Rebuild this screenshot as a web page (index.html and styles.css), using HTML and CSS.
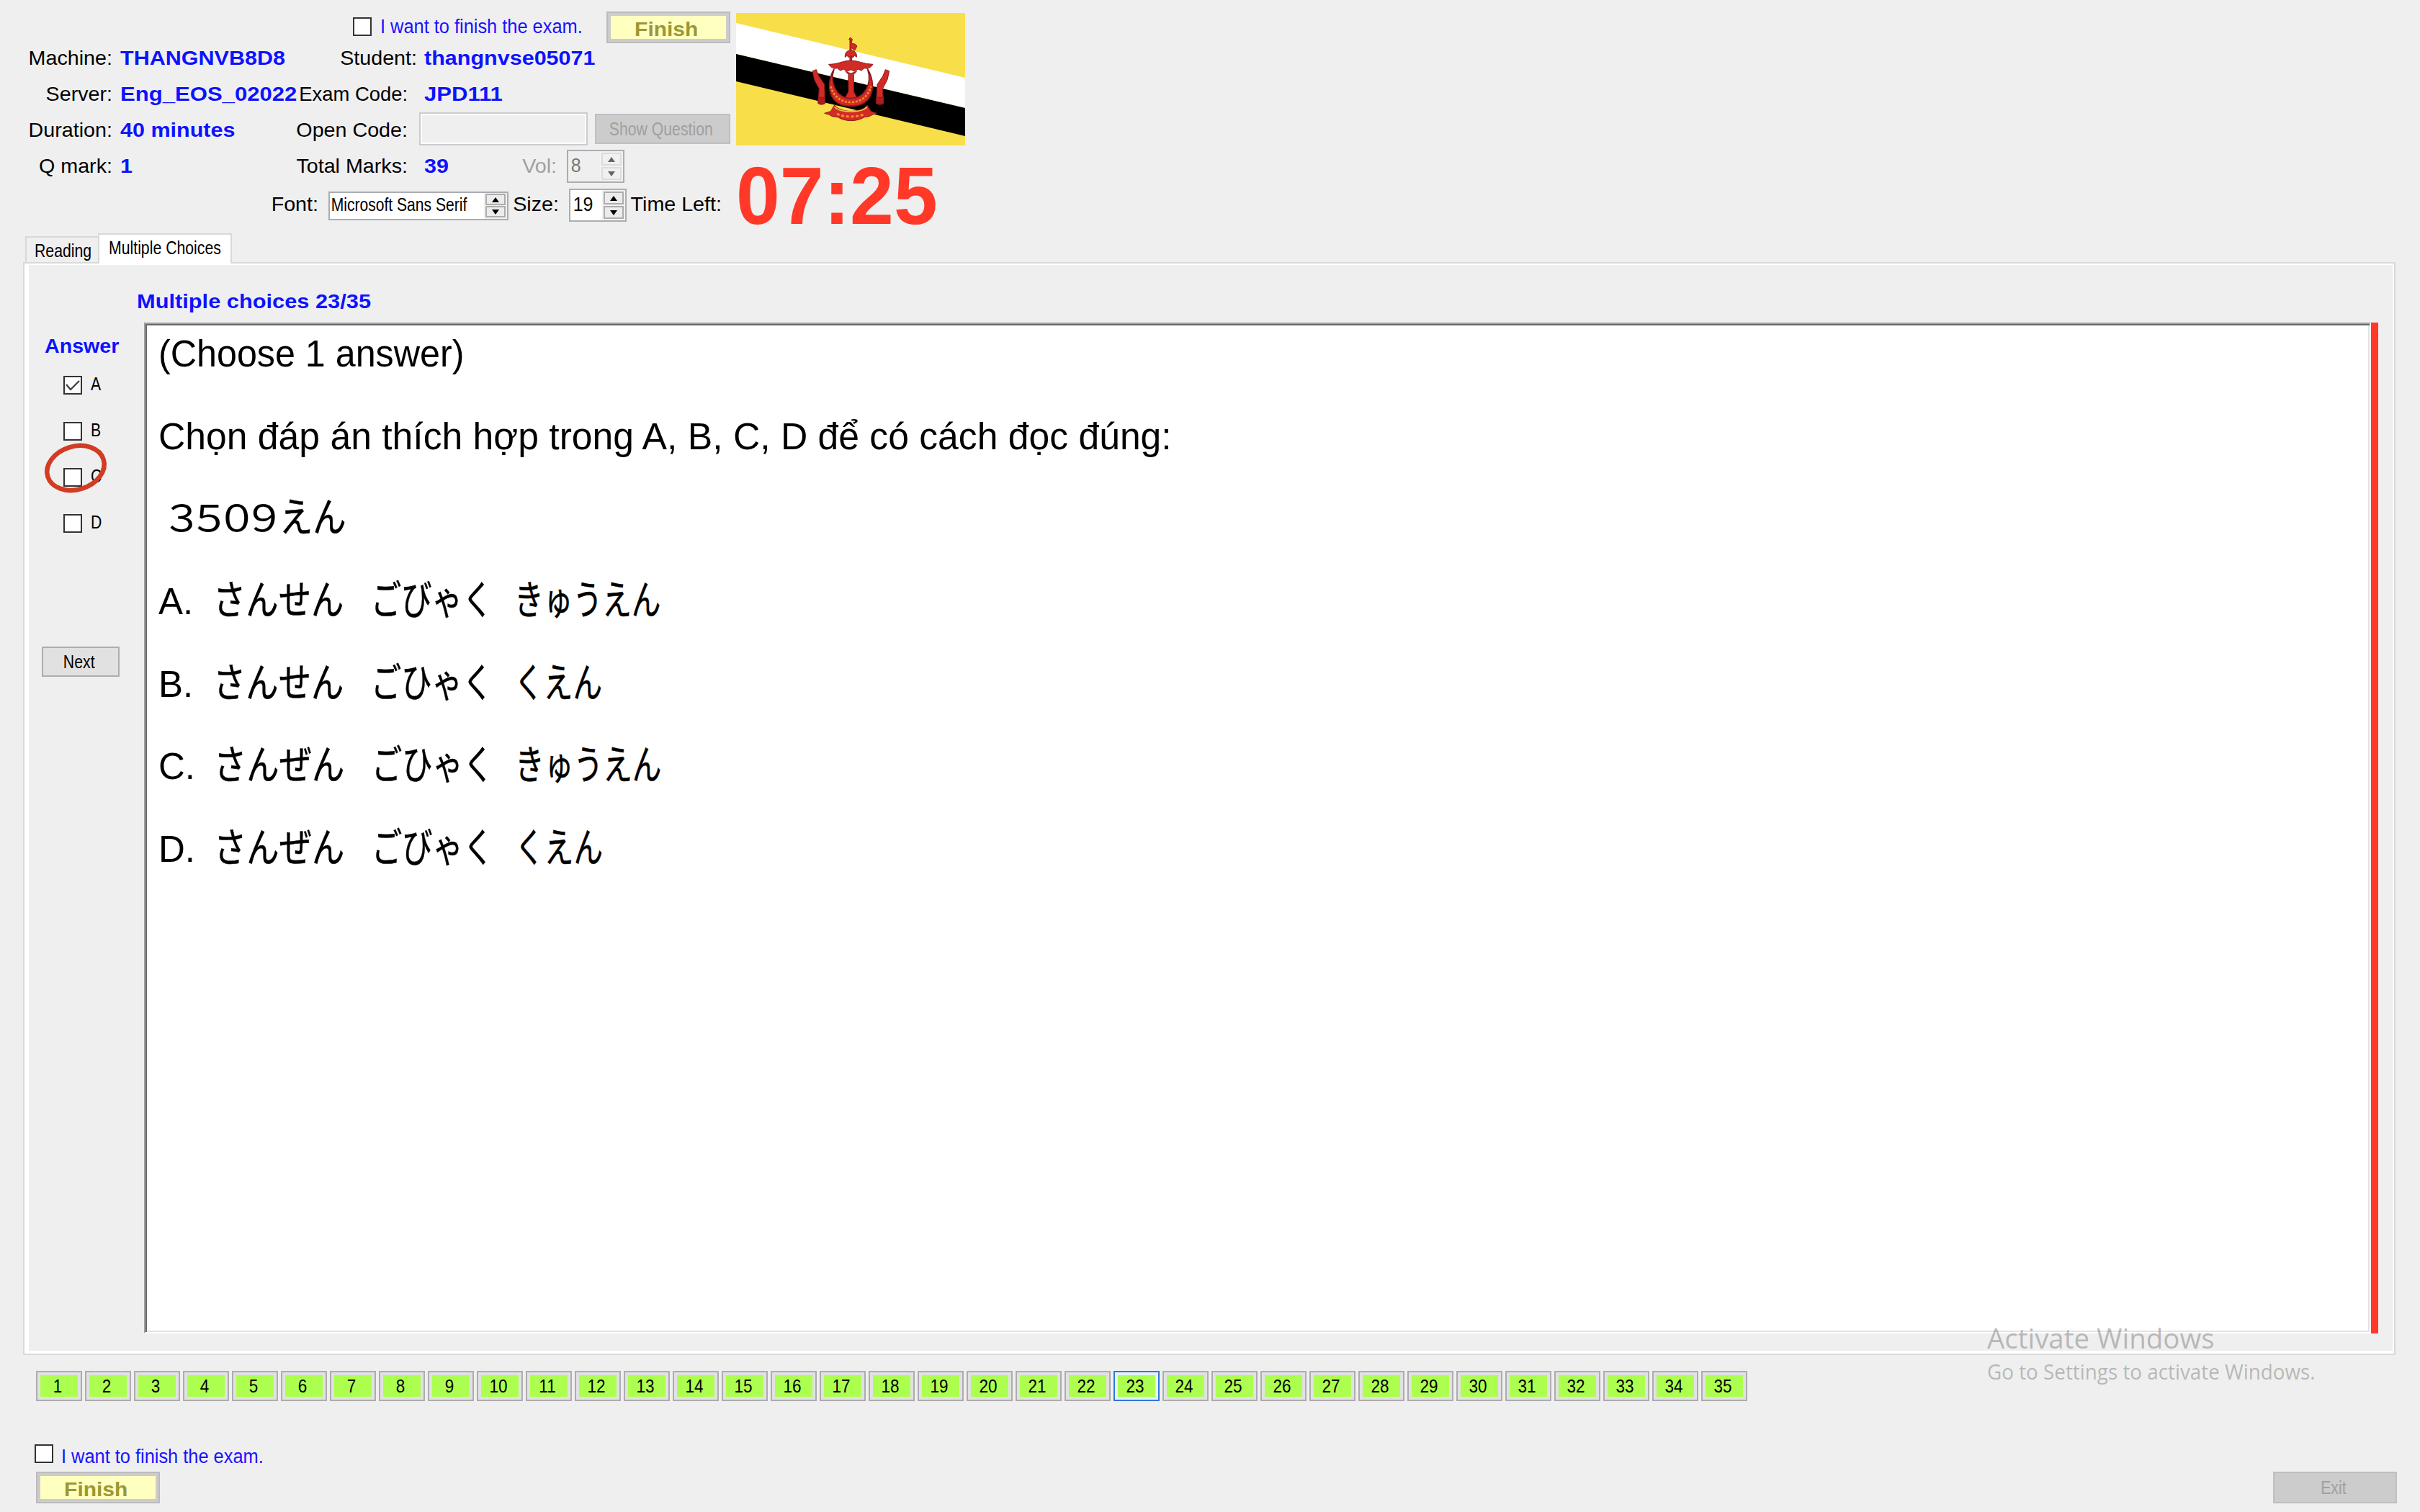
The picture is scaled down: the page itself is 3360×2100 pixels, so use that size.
FILE: index.html
```html
<!DOCTYPE html>
<html lang="vi">
<head>
<meta charset="utf-8">
<title>Exam client</title>
<link rel="stylesheet" href="styles.css">
</head>
<body>
<header class="header">
  <div class="info">
    <div class="finish-row">
      <span class="check"></span>
      <span class="agree">I want to finish the exam.</span>
      <button class="btn btn-finish"><span>Finish</span></button>
    </div>
    <div class="row">
      <span class="label">Machine:</span><span class="value">THANGNVB8D8</span>
      <span class="label label-student">Student:</span><span class="value value-wide">thangnvse05071</span>
    </div>
    <div class="row">
      <span class="label">Server:</span><span class="value value-server">Eng_EOS_02022</span>
      <span class="label label-exam">Exam Code:</span><span class="value value-wide value-server">JPD111</span>
    </div>
    <div class="row">
      <span class="label">Duration:</span><span class="value">40 minutes</span>
      <span class="label">Open Code:</span>
      <div class="open-code"><span class="textbox"></span><button class="btn btn-off btn-show"><span class="small">Show Question</span></button></div>
    </div>
    <div class="row">
      <span class="label">Q mark:</span><span class="value">1</span>
      <span class="label">Total Marks:</span>
      <div class="marks">
        <span class="value value-wide">39</span>
        <span class="label label-vol">Vol:</span>
        <div class="spinner spinner-off">
          <span class="num">8</span>
          <div class="steps">
            <span class="step"><svg width="10" height="7" viewBox="0 0 10 7"><path d="M0 7L5 0L10 7Z"/></svg></span>
            <span class="step"><svg width="10" height="7" viewBox="0 0 10 7"><path d="M0 0L5 7L10 0Z"/></svg></span>
          </div>
        </div>
      </div>
    </div>
    <div class="font-row">
      <span class="label label-font">Font:</span>
      <div class="spinner spinner-font">
        <span class="small">Microsoft Sans Serif</span>
        <div class="steps">
          <span class="step"><svg width="10" height="7" viewBox="0 0 10 7"><path d="M0 7L5 0L10 7Z"/></svg></span>
          <span class="step"><svg width="10" height="7" viewBox="0 0 10 7"><path d="M0 0L5 7L10 0Z"/></svg></span>
        </div>
      </div>
      <span class="label label-size">Size:</span>
      <div class="spinner">
        <span class="num">19</span>
        <div class="steps">
          <span class="step"><svg width="10" height="7" viewBox="0 0 10 7"><path d="M0 7L5 0L10 7Z"/></svg></span>
          <span class="step"><svg width="10" height="7" viewBox="0 0 10 7"><path d="M0 0L5 7L10 0Z"/></svg></span>
        </div>
      </div>
      <span class="label label-time">Time Left:</span>
    </div>
  </div>
  <div class="clock">
    <svg class="flag" width="318" height="184" viewBox="0 0 318 184">
      <rect width="318" height="184" fill="#f8df4a"/>
      <path d="M0 14L318 90V132L0 57Z" fill="#fff"/>
      <path d="M0 57L318 132V171L0 95Z" fill="#000"/>
      <g transform="translate(88 22) scale(.3333)" fill="#d22a25" stroke="#8d1a1c" stroke-width="3" stroke-linejoin="round">
        <path d="M210 92V44L206 44L212 36L220 44L216 60L232 64L240 72L230 90L216 78V92Z"/>
        <path d="M190 118C188 100 198 90 214 90S240 100 238 118L230 112L222 120L214 112L206 120L198 112Z"/>
        <path d="M210 116H218V134H210Z"/>
        <path d="M122 148C160 148 184 132 214 132S270 148 306 148C298 162 284 168 270 164L258 174L244 168L230 178L214 170L198 178L184 168L170 174L158 164C144 168 130 162 122 148Z"/>
        <path d="M192 178L204 190V262L192 284L196 294H234L238 284L226 262V190L238 178L214 186Z"/>
        <path d="M144 168C108 230 118 322 214 322S322 230 284 168C304 230 270 290 214 290S124 230 144 168Z" stroke-width="5"/>
        <path d="M130 240C144 286 176 306 214 306S284 286 298 240" fill="none" stroke="#f0902a" stroke-width="8" stroke-dasharray="9 6"/>
        <path d="M146 318C170 352 258 352 282 318L298 344L322 352L304 358C292 366 280 368 270 368C240 388 190 388 160 368C148 368 134 366 124 358L104 352L130 344Z"/>
        <path d="M146 326C172 352 256 352 282 326" fill="none" stroke="#e8c63c" stroke-width="5"/>
        <path d="M156 354C184 370 244 370 272 354" fill="none" stroke="#f0902a" stroke-width="9" stroke-dasharray="12 8"/>
        <path d="M54 176L70 170L80 196L104 232L106 308C106 318 78 318 78 308L82 250L62 212Z"/>
        <path d="M374 176L358 170L348 196L324 232L320 308C320 318 350 318 350 308L346 250L366 212Z"/>
        <path d="M78 286H106V312H78ZM320 286H350V312H320Z" fill="#a81f20"/>
      </g>
    </svg>
    <span class="time">07:25</span>
  </div>
</header>

<nav class="tabs">
  <span class="tab"><span class="small">Reading</span></span>
  <span class="tab tab-on"><span class="small">Multiple Choices</span></span>
</nav>

<main class="panel">
  <div class="page">
    <h1 class="title"><span>Multiple choices 23/35</span></h1>
    <div class="work">
      <aside class="side">
        <h2 class="answer">Answer</h2>
        <div class="option"><span class="check"><svg width="22" height="22" viewBox="0 0 22 22"><path d="M2 10L8 17L20 5" fill="none" stroke="#444" stroke-width="2.4"/></svg></span><span class="small">A</span></div>
        <div class="option"><span class="check"></span><span class="small">B</span></div>
        <div class="option"><span class="check"></span><span class="small">C</span>
          <svg class="ring" width="96" height="80" viewBox="0 0 96 80"><ellipse cx="48" cy="40" rx="40.5" ry="30" transform="rotate(-17 48 40)" fill="none" stroke="#d23c22" stroke-width="6.5"/></svg>
        </div>
        <div class="option"><span class="check"></span><span class="small">D</span></div>
        <button class="btn btn-next"><span class="small">Next</span></button>
      </aside>
      <section class="question">
        <p><span class="choose">(Choose 1 answer)</span></p>
        <p><span class="prompt">Chọn đáp án thích hợp trong A, B, C, D để có cách đọc đúng:</span></p>
        <p class="price"><span class="digits">３５０９</span><span class="yen">えん</span></p>
        <p><span class="key">A.</span><span class="w1">さんせん</span><span class="w2">ごびゃく</span><span class="w3">きゅうえん</span></p>
        <p><span class="key">B.</span><span class="w1">さんせん</span><span class="w2">ごひゃく</span><span class="w3">くえん</span></p>
        <p><span class="key key-wide">C.</span><span class="w1">さんぜん</span><span class="w2">ごひゃく</span><span class="w3">きゅうえん</span></p>
        <p><span class="key key-wide">D.</span><span class="w1">さんぜん</span><span class="w2">ごびゃく</span><span class="w3">くえん</span></p>
      </section>
      <div class="redbar"></div>
    </div>
  </div>
</main>

<nav class="numbers">
  <button class="no"><span>1</span></button><button class="no"><span>2</span></button><button class="no"><span>3</span></button><button class="no"><span>4</span></button><button class="no"><span>5</span></button><button class="no"><span>6</span></button><button class="no"><span>7</span></button><button class="no"><span>8</span></button><button class="no"><span>9</span></button><button class="no"><span>10</span></button><button class="no"><span>11</span></button><button class="no"><span>12</span></button><button class="no"><span>13</span></button><button class="no"><span>14</span></button><button class="no"><span>15</span></button><button class="no"><span>16</span></button><button class="no"><span>17</span></button><button class="no"><span>18</span></button><button class="no"><span>19</span></button><button class="no"><span>20</span></button><button class="no"><span>21</span></button><button class="no"><span>22</span></button><button class="no no-on"><span>23</span></button><button class="no"><span>24</span></button><button class="no"><span>25</span></button><button class="no"><span>26</span></button><button class="no"><span>27</span></button><button class="no"><span>28</span></button><button class="no"><span>29</span></button><button class="no"><span>30</span></button><button class="no"><span>31</span></button><button class="no"><span>32</span></button><button class="no"><span>33</span></button><button class="no"><span>34</span></button><button class="no"><span>35</span></button>
</nav>

<footer class="footer">
  <div class="consent"><span class="check"></span><span class="agree">I want to finish the exam.</span></div>
  <div class="actions">
    <button class="btn btn-finish"><span>Finish</span></button>
    <button class="btn btn-off btn-exit"><span class="small">Exit</span></button>
  </div>
</footer>

<div class="watermark">
  <div class="wm-title">Activate Windows</div>
  <div class="wm-text">Go to Settings to activate Windows.</div>
</div>
</body>
</html>
```

FILE: styles.css
```css
* { box-sizing: border-box; margin: 0; padding: 0; }

body {
  width: 3360px;
  height: 2100px;
  overflow: hidden;
  position: relative;
  background: #efefef;
  color: #000;
  font-family: "Liberation Sans", Arial, sans-serif;
  font-size: 28px;
  white-space: nowrap;
}

button { font-family: inherit; color: inherit; }

/* Shared text styles */
.small { display: inline-block; font-size: 25px; transform: scaleX(.85); transform-origin: 0 50%; }
.agree { display: inline-block; font-size: 27px; line-height: 50px; color: #1a12ff; transform: scaleX(.94); transform-origin: 0 50%; }

.check {
  display: block;
  flex: none;
  width: 26px;
  height: 26px;
  border: 2px solid #333;
  background: #fff;
}
.check svg { display: block; }

/* Buttons */
.btn {
  display: flex;
  flex: none;
  align-items: center;
  justify-content: center;
  border: 2px solid #adadad;
  background: #e1e1e1;
  padding-right: 5px;
}
.btn .small { transform-origin: 50% 50%; }
.btn-off { background: #ccc; border-color: #bfbfbf; color: #a0a0a0; }
.btn-finish {
  width: 172px;
  height: 44px;
  padding: 5px 6px 0 0;
  border-color: #bcbcbc;
  background: #ffffc0;
  box-shadow: inset 0 0 0 4px #ccc;
  color: #9a9833;
  font-weight: bold;
  font-size: 28px;
}
.btn-finish span { transform: scaleX(1.07); }

/* Header */
.header { display: flex; height: 324px; }
.info { width: 1022px; flex: none; }
.finish-row { display: flex; height: 56px; padding-left: 490px; }
.finish-row .check { margin-top: 24px; }
.finish-row .agree { width: 314px; margin: 12px 0 -6px 12px; }
.finish-row .btn { margin-top: 16px; }

.row { display: grid; grid-template-columns: 157px 253px 157px 455px; height: 50px; line-height: 50px; }
.label { display: block; padding-right: 1px; text-align: right; transform: scaleX(1.024); transform-origin: 100% 50%; }
.label-student { margin-right: -13px; }
.label-exam { transform: scaleX(.978); }
.value { display: block; margin-left: 10px; color: #0d12ff; font-weight: bold; transform: scaleX(1.09); transform-origin: 0 50%; }
.value-server { transform: scaleX(1.11); }
.value-wide { margin-left: 22px; }

.open-code { display: flex; padding-left: 15px; }
.textbox { width: 234px; height: 46px; border: 2px solid #ccc; box-shadow: inset 0 0 0 2px #fff; }
.btn-show { width: 188px; height: 42px; margin: 2px 0 0 10px; }

.marks { display: flex; }
.label-vol { width: 119px; margin-left: 35px; color: #a0a0a0; }
.marks .spinner { margin: 2px 0 0 13px; }

.font-row { display: flex; height: 50px; margin-top: 3px; line-height: 50px; }
.label-font { width: 443px; }
.label-size { width: 71px; }
.label-time { width: 133px; }
.font-row .spinner { margin: 3px 0 0 13px; }
.font-row .spinner-font { margin: 7px 0 0 13px; }

.spinner { display: flex; flex: none; justify-content: space-between; width: 80px; height: 46px; border: 2px solid #abadb3; background: #fff; }
.spinner-font { width: 250px; height: 40px; }
.spinner-font .small { width: 200px; padding-left: 2px; line-height: 33px; transform: scaleX(.843); }
.num { display: block; width: 34px; padding-left: 4px; font-size: 27px; line-height: 40px; transform: scaleX(.925); transform-origin: 0 50%; }
.steps { display: flex; flex-direction: column; gap: 2px; width: 32px; padding: 2px 2px 0 2px; background: #f2f2f2; height: 42px; }
.step { display: flex; align-items: center; justify-content: center; width: 28px; height: 18px; border: 2px solid #adadad; background: #ececec; }
.spinner-font .steps { height: 36px; gap: 1px; padding-top: 1px; }
.spinner-font .step { height: 16px; }
.spinner-off { background: #efefef; color: #777; fill: #666; }
.spinner-off .step { border-color: #dcdcdc; background: #f0f0f0; }

.clock { display: flex; flex: none; flex-direction: column; width: 318px; padding-top: 18px; }
.flag { display: block; flex: none; }
.time { display: block; margin-top: 10px; color: #ff3828; font-weight: bold; font-size: 113px; line-height: 120px; transform: scaleX(.968); transform-origin: 0 50%; }

/* Tabs */
.tabs { display: flex; align-items: flex-end; height: 40px; padding-left: 35px; }
.tab { width: 101px; height: 36px; padding-left: 11px; border: 2px solid #d9d9d9; border-width: 2px 0 0 2px; line-height: 36px; }
.tab-on { position: relative; z-index: 1; width: 186px; height: 42px; margin-bottom: -2px; padding-left: 13px; border-width: 2px 2px 0; background: #fff; line-height: 35px; }

/* Tab page */
.panel { width: 3294px; height: 1518px; margin-left: 32px; padding: 2px 2px 4px 6px; border: 2px solid #d9d9d9; background: #fff; }
.page { height: 1508px; padding-top: 33px; background: #efefef; }
.title { height: 47px; padding-left: 150px; color: #0d12ff; font-size: 27px; line-height: 36px; }
.title span { display: inline-block; transform: scaleX(1.14); transform-origin: 0 50%; }
.work { display: flex; height: 1404px; }
.side { width: 160px; padding: 15px 0 0 18px; }
.answer { height: 40px; padding-left: 4px; color: #0d12ff; font-size: 27px; line-height: 36px; transform: scaleX(1.061); transform-origin: 5px 50%; }
.option { position: relative; display: flex; align-items: center; height: 64px; padding-left: 30px; }
.option .small { margin: -3px 0 0 12px; }
.ring { position: absolute; left: -1px; top: -21px; }
.btn-next { width: 108px; height: 42px; margin-top: 139px; }

.question {
  width: 3092px;
  padding: 0 0 0 18px;
  border: 2px solid;
  border-color: #a0a0a0 #fff #fff #a0a0a0;
  background: #fff;
  box-shadow: inset 2px 2px 0 #696969, inset -2px -2px 0 #e3e3e3;
  font-size: 51px;
}
.question p { height: 114.7px; line-height: 114.7px; position: relative; top: -15px; }
.question span { display: inline-block; transform-origin: 0 50%; }
.choose { transform: scaleX(.985); }
.prompt { transform: scaleX(1.013); }
.key { width: 76px; }
.key-wide { width: 77px; }
.w1, .w2, .w3, .yen { font-family: "Noto Sans CJK JP", sans-serif; font-size: 56px; line-height: 56px; -webkit-text-stroke: .5px #000; }
.w1 { width: 219px; transform: scaleX(.81); }
.w2 { width: 199px; transform: scaleX(.756); }
.w3 { transform: scaleX(.727); }
.price { padding-left: 4px; }
.digits { width: 164px; font-family: "Noto Sans CJK JP", sans-serif; line-height: 51px; letter-spacing: -17px; transform: scaleX(1.12); }
.yen { transform: scaleX(.827); }
.redbar { width: 10px; background: #ff3828; }

/* Question navigator */
.numbers { display: flex; gap: 4px; padding: 22px 0 0 50px; }
.no {
  display: flex;
  align-items: center;
  justify-content: center;
  width: 64px;
  height: 42px;
  padding-right: 4px;
  border: 2px solid #adadad;
  background: #adff4f;
  box-shadow: inset 0 0 0 4px #e1e1e1;
  font-size: 25px;
}
.no span { transform: scaleX(.9); }
.no-on { border-color: #2f78d7; box-shadow: inset 0 0 0 4px #e5f1fb; }

/* Footer */
.footer { padding: 52px 32px 0 48px; }
.consent { display: flex; height: 46px; }
.consent .check { margin-top: 8px; }
.consent .agree { margin: 0 0 0 11px; }
.actions { display: flex; justify-content: space-between; margin-top: 0; padding-left: 2px; }
.consent { margin-bottom: 0; overflow: visible; }
.btn-exit { width: 172px; height: 44px; }

.watermark { position: absolute; left: 2759px; top: 1831px; color: rgba(120, 120, 120, .48); font-family: "Open Sans", sans-serif; }
.wm-title { height: 54px; font-size: 39px; transform: scaleX(.986); transform-origin: 0 50%; }
.wm-text { font-size: 29px; transform: scaleX(.959); transform-origin: 0 50%; }
```
